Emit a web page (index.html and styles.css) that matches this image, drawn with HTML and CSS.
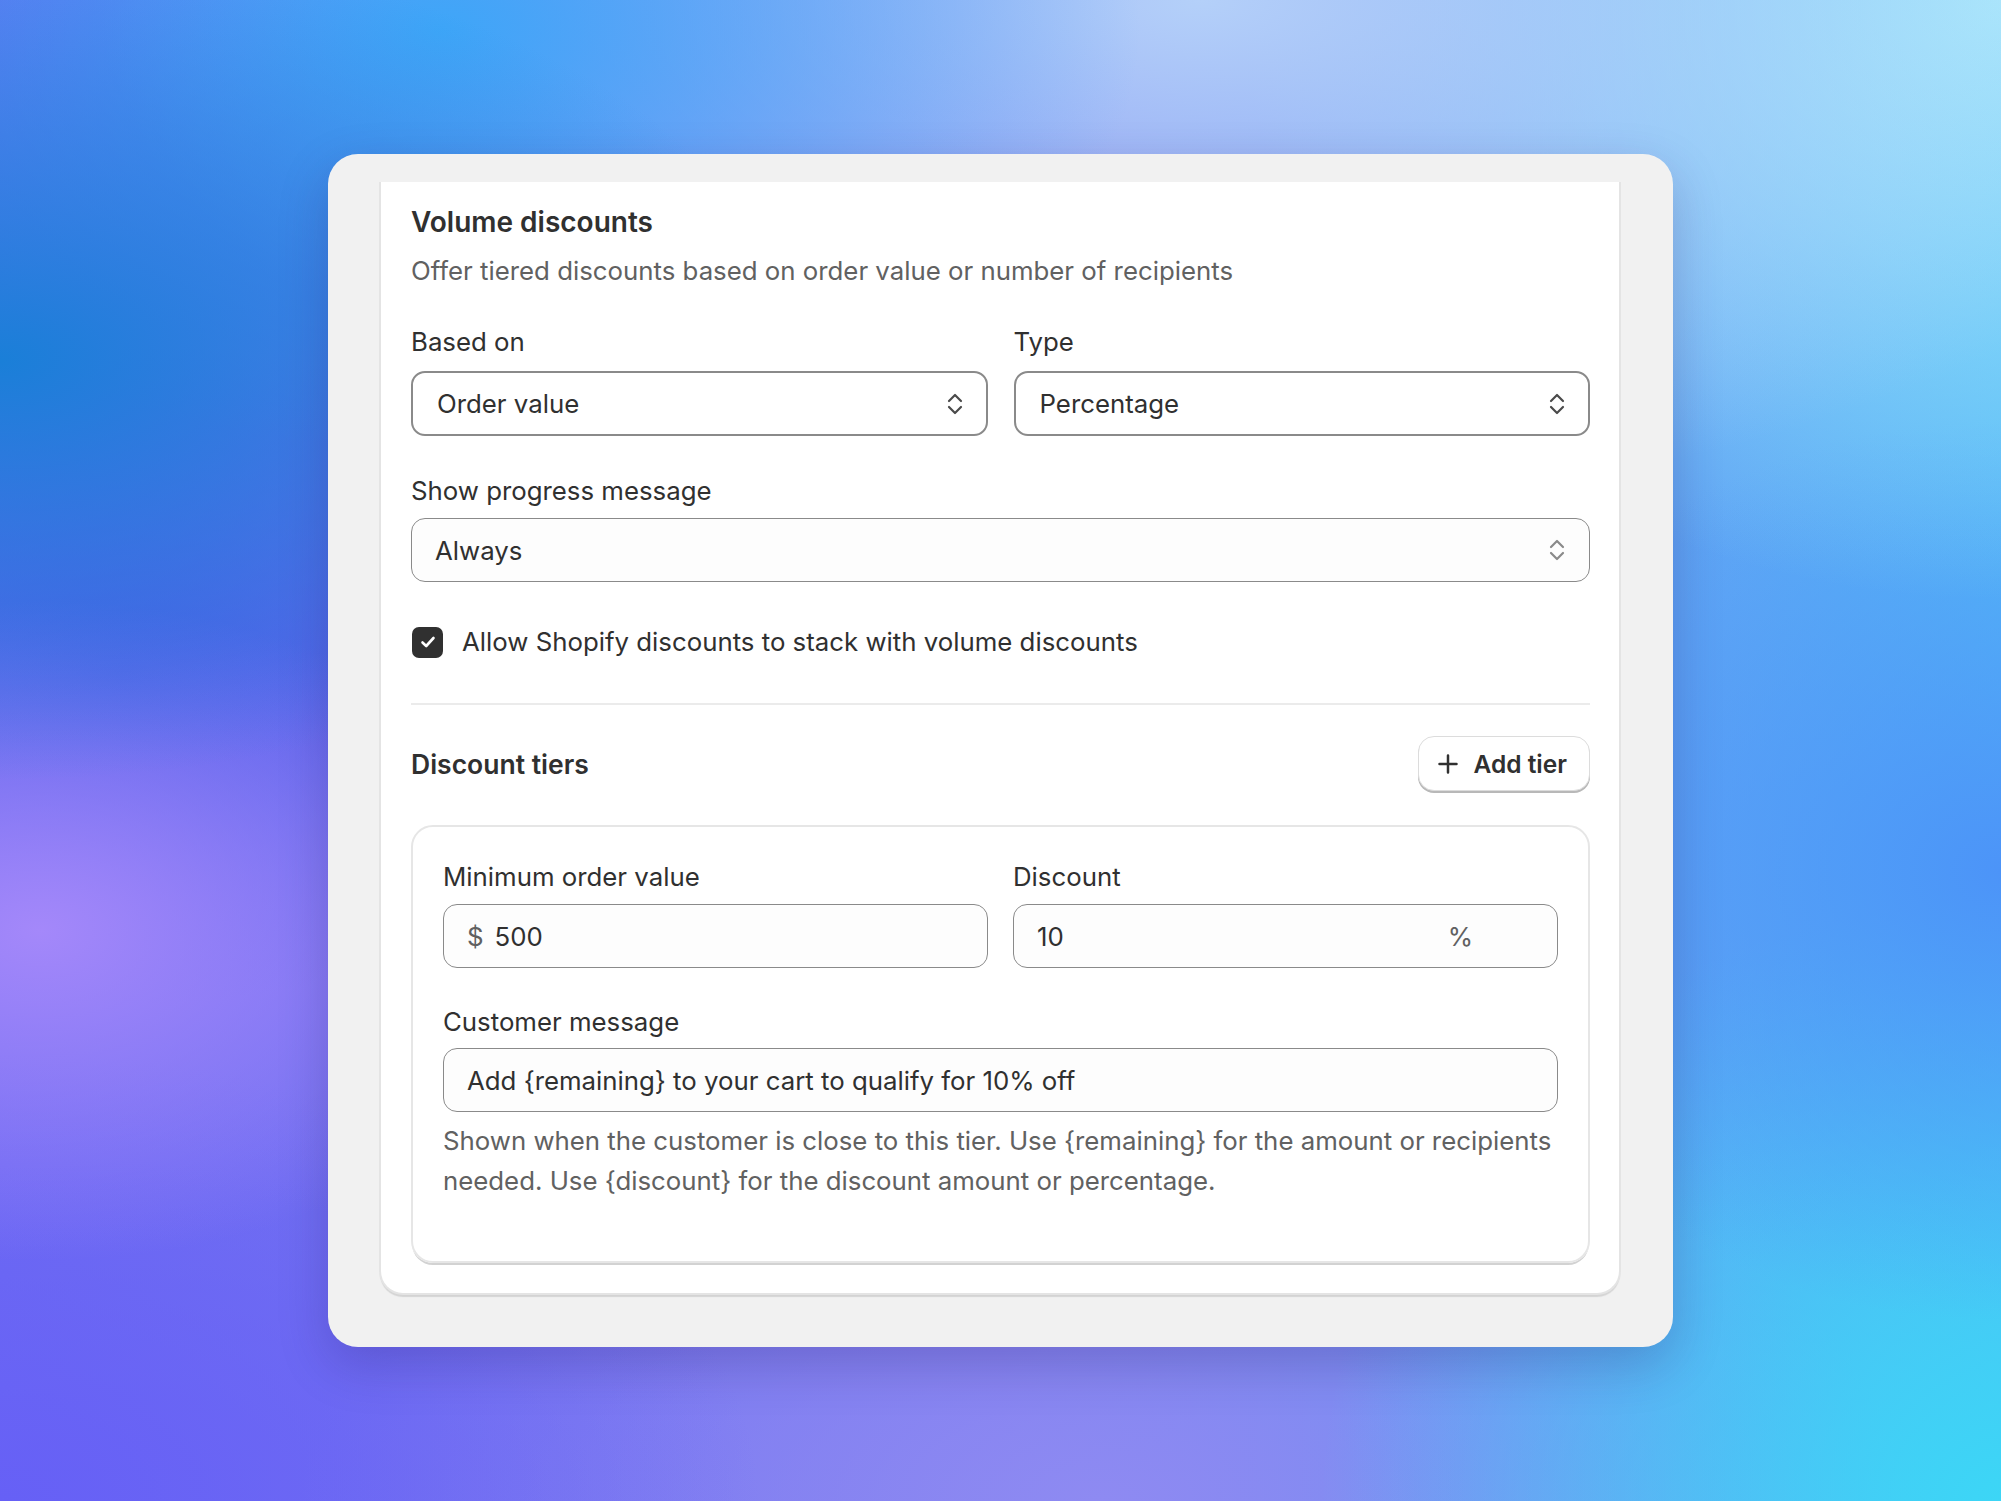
FILE: index.html
```html
<!DOCTYPE html>
<html lang="en">
  <head>
    <meta charset="UTF-8">
    <meta name="viewport" content="width=device-width, initial-scale=1.0">
    <title>Volume discounts</title>
    <link rel="stylesheet" href="styles.css">
  </head>
  <body>
    <div class="frame">
      <div class="card">
        <h1 class="card-title">Volume discounts</h1>
        <p class="card-subtitle">Offer tiered discounts based on order value or number of recipients</p>

        <div class="field-row">
          <div class="field">
            <label class="field-label">Based on</label>
            <div class="select select-strong">
              <span>Order value</span>
              <svg class="select-icon" width="18" height="28" viewBox="0 0 18 28"><path d="M3 11 L9 5 L15 11 M3 17 L9 23 L15 17"/></svg>
            </div>
          </div>
          <div class="field">
            <label class="field-label">Type</label>
            <div class="select select-strong">
              <span>Percentage</span>
              <svg class="select-icon" width="18" height="28" viewBox="0 0 18 28"><path d="M3 11 L9 5 L15 11 M3 17 L9 23 L15 17"/></svg>
            </div>
          </div>
        </div>

        <div class="field field-progress">
          <label class="field-label">Show progress message</label>
          <div class="select select-soft">
            <span>Always</span>
            <svg class="select-icon" width="18" height="28" viewBox="0 0 18 28"><path d="M3 11 L9 5 L15 11 M3 17 L9 23 L15 17"/></svg>
          </div>
        </div>

        <div class="checkbox-row">
          <span class="checkbox">
            <svg width="20" height="20" viewBox="0 0 20 20"><path d="M4.5 10.5 L8.2 14 L15.5 6"/></svg>
          </span>
          <span>Allow Shopify discounts to stack with volume discounts</span>
        </div>

        <hr class="divider">

        <div class="tiers-header">
          <h2 class="tiers-title">Discount tiers</h2>
          <button class="add-button">
            <svg width="20" height="20" viewBox="0 0 20 20"><path d="M10 1.5 V18.5 M1.5 10 H18.5"/></svg>
            Add tier
          </button>
        </div>

        <div class="tier">
          <div class="field-row">
            <div class="field">
              <label class="field-label">Minimum order value</label>
              <div class="input">
                <span class="input-prefix">$</span>
                <span>500</span>
              </div>
            </div>
            <div class="field">
              <label class="field-label">Discount</label>
              <div class="input">
                <span class="input-value">10</span>
                <span class="input-suffix">%</span>
              </div>
            </div>
          </div>

          <div class="field field-message">
            <label class="field-label">Customer message</label>
            <div class="input">
              <span>Add {remaining} to your cart to qualify for 10% off</span>
            </div>
            <p class="help-text">Shown when the customer is close to this tier. Use {remaining} for the amount or recipients needed. Use {discount} for the discount amount or percentage.</p>
          </div>
        </div>
      </div>
    </div>
  </body>
</html>
```

FILE: styles.css
```css
/* Page */
body {
  margin: 0;
  min-height: 100vh;
  display: flex;
  align-items: center;
  justify-content: center;
  font-family: Inter, "Noto Sans", sans-serif;
  color: #303030;
  background-color: #7c78f0;
  background-image:
    radial-gradient(ellipse 40% 28% at 0% 24%, #1a7fd8 0%, rgba(26, 127, 216, 0) 100%),
    radial-gradient(ellipse 35% 28% at 22% 2%, #3ea6f8 0%, rgba(62, 166, 248, 0) 100%),
    radial-gradient(ellipse 55% 34% at 60% 0%, #b4d0f9 0%, rgba(180, 208, 249, 0) 100%),
    radial-gradient(ellipse 38% 40% at 100% 0%, #a6ecfc 0%, rgba(166, 236, 252, 0) 100%),
    radial-gradient(ellipse 28% 30% at 100% 58%, #4c94f8 0%, rgba(76, 148, 248, 0) 100%),
    radial-gradient(ellipse 34% 40% at 100% 100%, #3cd6f6 0%, rgba(60, 214, 246, 0) 100%),
    radial-gradient(ellipse 26% 22% at 2% 62%, #a488fa 0%, rgba(164, 136, 250, 0) 100%),
    radial-gradient(ellipse 28% 22% at 6% 45%, #4d5ee8 0%, rgba(77, 94, 232, 0) 100%),
    radial-gradient(ellipse 38% 30% at 0% 100%, #6660f6 0%, rgba(102, 96, 246, 0) 100%),
    radial-gradient(ellipse 40% 28% at 55% 100%, #8e8af2 0%, rgba(142, 138, 242, 0) 100%),
    linear-gradient(90deg, #6e6cf2, #7a7af0 50%, #55b8f6);
}

/* Outer gray frame */
.frame {
  width: 1345px;
  box-sizing: border-box;
  padding: 28px 52px 52px 51px;
  background: #f1f1f1;
  border-radius: 30px;
  box-shadow: 0 18px 50px rgba(30, 20, 90, 0.22);
}

/* White card (scrolled, so no top edge) */
.card {
  background: #ffffff;
  border: 2px solid #e4e4e4;
  border-top: none;
  border-radius: 0 0 24px 24px;
  box-shadow: 0 3px 1px -1px rgba(0, 0, 0, 0.12);
  padding: 22px 29px 30px 30px;
}

.card-title {
  margin: 0;
  font-size: 28px;
  line-height: 36px;
  font-weight: 600;
}

.card-subtitle {
  margin: 15px 0 0;
  font-size: 25.8px;
  line-height: 32px;
  color: #616161;
}

/* Fields */
.field-row {
  display: grid;
  grid-template-columns: 1fr 1fr;
  gap: 26px;
  margin-top: 39px;
}

.field-label {
  display: block;
  font-size: 25.8px;
  line-height: 32px;
  margin-bottom: 13px;
}

.field-progress {
  margin-top: 39px;
}

.field-progress .field-label {
  margin-bottom: 11px;
}

.select {
  display: flex;
  align-items: center;
  justify-content: space-between;
  box-sizing: border-box;
  font-size: 25.8px;
}

.select-strong {
  height: 65px;
  padding: 0 22px 0 24px;
  border: 2px solid #8a8a8a;
  border-radius: 14px;
  background: #ffffff;
}

.select-soft {
  height: 64px;
  padding: 0 23px 0 23px;
  border: 1px solid #8a8a8a;
  border-radius: 14px;
  background: #fdfdfd;
}

.select-icon path {
  fill: none;
  stroke: #4a4a4a;
  stroke-width: 2.2;
  stroke-linecap: round;
  stroke-linejoin: round;
}

.select-soft .select-icon path {
  stroke: #8a8a8a;
}

/* Checkbox */
.checkbox-row {
  display: flex;
  align-items: center;
  gap: 19px;
  margin-top: 44px;
  font-size: 25.8px;
  line-height: 32px;
  padding-left: 1px;
}

.checkbox {
  width: 31px;
  height: 31px;
  border-radius: 7px;
  background: #303030;
  display: flex;
  align-items: center;
  justify-content: center;
}

.checkbox path {
  fill: none;
  stroke: #ffffff;
  stroke-width: 2.6;
  stroke-linecap: round;
  stroke-linejoin: round;
}

.divider {
  border: none;
  border-top: 2px solid #ebebeb;
  margin: 45px 0 0;
}

/* Discount tiers */
.tiers-header {
  display: flex;
  align-items: center;
  justify-content: space-between;
  margin-top: 31px;
}

.tiers-title {
  margin: 0;
  font-size: 26.5px;
  line-height: 34px;
  font-weight: 600;
}

.add-button {
  display: flex;
  align-items: center;
  gap: 16px;
  height: 55px;
  padding: 0 22px 0 19px;
  font-family: inherit;
  font-size: 24.5px;
  font-weight: 600;
  color: #303030;
  background: #ffffff;
  border: 1.5px solid #dcdcdc;
  border-radius: 16px;
  box-shadow: 0 2px 0 #b8b8b8;
  cursor: pointer;
}

.add-button path {
  fill: none;
  stroke: #303030;
  stroke-width: 2.5;
  stroke-linecap: round;
}

.tier {
  margin-top: 34px;
  border: 2px solid #e6e6e6;
  border-radius: 22px;
  box-shadow: 0 3px 0 -1px #d2d2d2;
  padding: 34px 30px 60px 30px;
}

.tier .field-row {
  margin-top: 0;
  gap: 25px;
}

.tier .field-label {
  margin-bottom: 11px;
}

.input {
  display: flex;
  align-items: center;
  box-sizing: border-box;
  height: 64px;
  padding: 0 22px 0 23px;
  border: 1px solid #8a8a8a;
  border-radius: 14px;
  background: #fdfdfd;
  font-size: 25.8px;
}

.input-prefix {
  color: #616161;
  margin-right: 11px;
}

.input-value {
  flex: 1;
}

.input-suffix {
  color: #616161;
  margin-right: 62px;
}

.field-message {
  margin-top: 38px;
}

.field-message .field-label {
  margin-bottom: 10px;
}

.help-text {
  margin: 9px 0 0;
  font-size: 25.8px;
  line-height: 40px;
  color: #616161;
}
```
